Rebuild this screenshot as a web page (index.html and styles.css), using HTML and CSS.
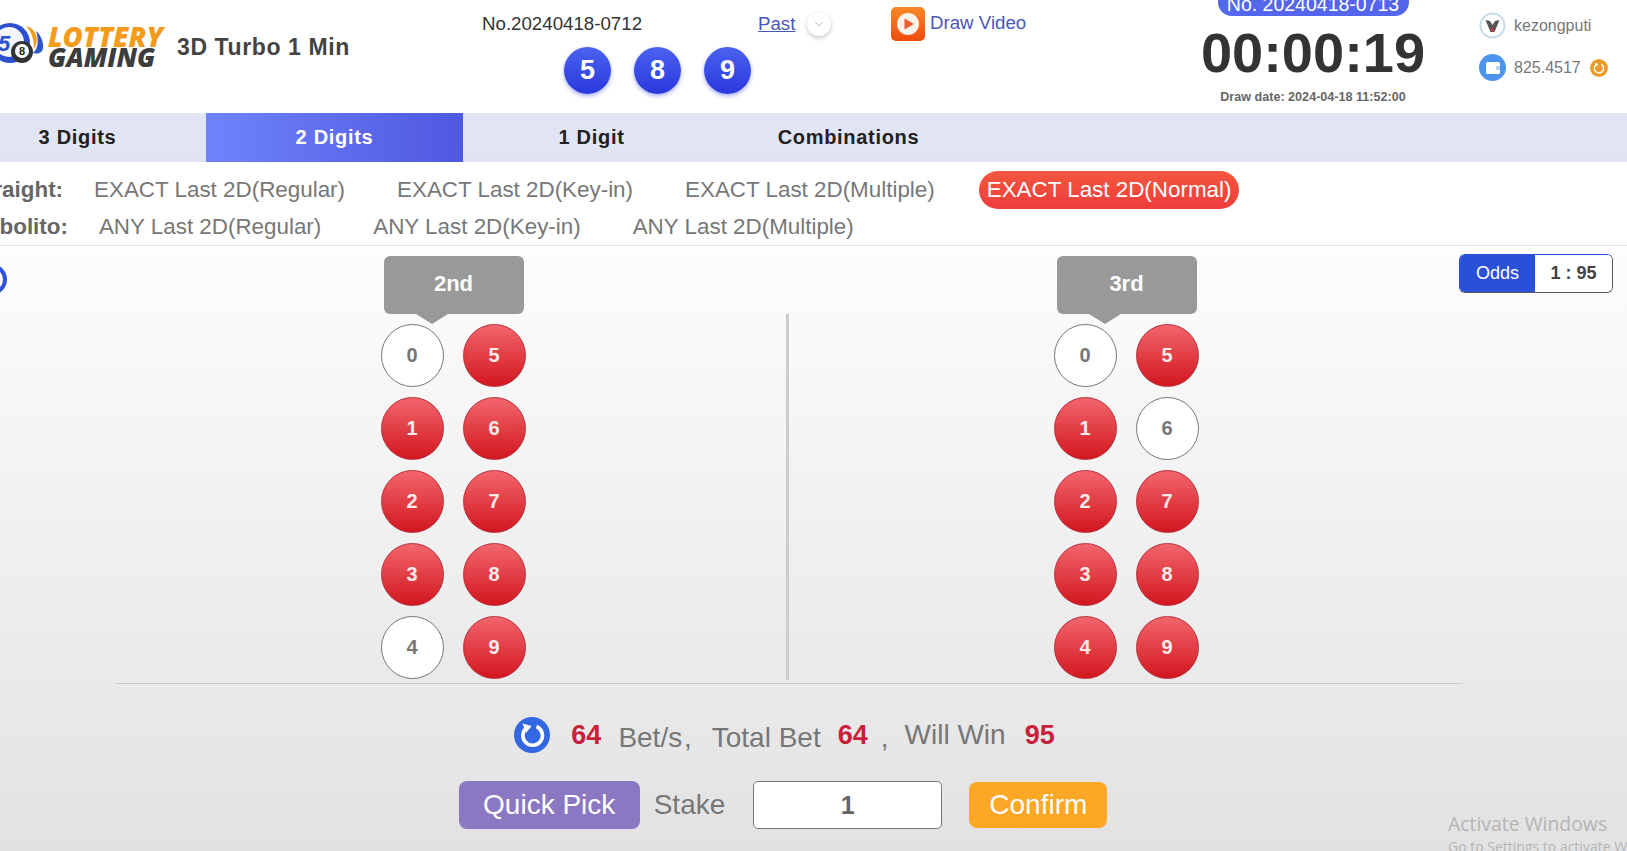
FILE: index.html
```html
<!DOCTYPE html>
<html lang="en">
<head>
    <meta charset="UTF-8">
    <title>3D Turbo 1 Min</title>
    <link rel="stylesheet" href="styles.css">
</head>
<body>

<div class="page">

    <!-- top bar -->
    <div class="header">
        <div class="brand">
            <svg class="brand-balls" width="60" height="50" viewBox="0 0 60 50">
                <path d="M31 4 C41 6 45 18 39 27 C39 18 37 10 31 4Z" fill="#f59b1c"/>
                <path d="M41 9 C47 14 50 24 47 29 C44 32 41 32 38 31 C43 27 44 18 41 9Z" fill="#2f55c8"/>
                <circle cx="15" cy="21" r="20" fill="#2b4fd0"/>
                <circle cx="14" cy="20" r="15" fill="#f4f6fc"/>
                <text x="9" y="29" class="brand-five">5</text>
                <circle cx="27" cy="30" r="11" fill="#333"/>
                <circle cx="27" cy="29" r="7" fill="#fff"/>
                <text x="27" y="33" class="brand-eight">8</text>
            </svg>
            <div class="brand-name">
                <div class="brand-top">LOTTERY</div>
                <div class="brand-bottom">GAMING</div>
            </div>
            <div class="game-name">3D Turbo 1 Min</div>
        </div>

        <div class="last-draw">
            <div class="last-no">No.20240418-0712</div>
            <div class="last-balls">
                <span class="result-ball">5</span>
                <span class="result-ball">8</span>
                <span class="result-ball">9</span>
            </div>
        </div>

        <div class="past">
            <a href="#" class="link">Past</a>
            <span class="past-toggle">
                <svg width="10" height="6" viewBox="0 0 10 6"><path d="M1 1 L5 5 L9 1" fill="none" stroke="#bbb" stroke-width="1"/></svg>
            </span>
        </div>

        <div class="video">
            <span class="video-icon">
                <svg width="34" height="34" viewBox="0 0 34 34">
                    <circle cx="17" cy="17" r="11" fill="#fdf3ea"/>
                    <path d="M13.5 11.5 L23 17 L13.5 22.5Z" fill="#ee5a32"/>
                </svg>
            </span>
            <a href="#" class="video-link">Draw Video</a>
        </div>

        <div class="countdown">
            <div class="next-no">No. 20240418-0713</div>
            <div class="timer">00:00:19</div>
            <div class="draw-date">Draw date: 2024-04-18 11:52:00</div>
        </div>

        <div class="account">
            <div class="account-row">
                <svg width="27" height="27" viewBox="0 0 27 27">
                    <circle cx="13.5" cy="13.5" r="12" fill="#fff" stroke="#c6dcec" stroke-width="2"/>
                    <path d="M6.5 8 L11 9 L13.5 13 L16 9 L20.5 8 L15.5 20 L11.5 20Z" fill="#555"/>
                    <path d="M13.5 15 L15.5 19 L11.5 19Z" fill="#d8344a"/>
                </svg>
                <span>kezongputi</span>
            </div>
            <div class="account-row">
                <svg width="27" height="27" viewBox="0 0 27 27">
                    <circle cx="13.5" cy="13.5" r="13.5" fill="#4f94ec"/>
                    <rect x="7" y="8" width="14" height="12" rx="1.5" fill="#fff"/>
                    <rect x="17" y="12" width="4" height="4" fill="#b8d4f4"/>
                </svg>
                <span>825.4517</span>
                <svg class="balance-refresh" width="18" height="18" viewBox="0 0 18 18">
                    <circle cx="9" cy="9" r="9" fill="#eb9c2a"/>
                    <path d="M6.2 5.6 A4.6 4.6 0 1 0 11.4 5.4" fill="none" stroke="#fff" stroke-width="1.4"/>
                    <path d="M5 3.8 L8.4 5 L6 7.6Z" fill="#fff"/>
                </svg>
            </div>
        </div>
    </div>

    <!-- game tabs -->
    <div class="tabs">
        <div class="tab">3 Digits</div>
        <div class="tab active">2 Digits</div>
        <div class="tab">1 Digit</div>
        <div class="tab">Combinations</div>
    </div>

    <!-- bet types -->
    <div class="types">
        <div class="type-row straight">
            <span class="type-label">Straight:</span>
            <div class="type-options">
                <span class="type-item">EXACT Last 2D(Regular)</span>
                <span class="type-item">EXACT Last 2D(Key-in)</span>
                <span class="type-item">EXACT Last 2D(Multiple)</span>
                <span class="type-item selected">EXACT Last 2D(Normal)</span>
            </div>
        </div>
        <div class="type-row rambolito">
            <span class="type-label">Rambolito:</span>
            <div class="type-options">
                <span class="type-item">ANY Last 2D(Regular)</span>
                <span class="type-item">ANY Last 2D(Key-in)</span>
                <span class="type-item">ANY Last 2D(Multiple)</span>
            </div>
        </div>
    </div>

    <!-- number board -->
    <div class="main">
        <span class="help-dot"></span>

        <div class="odds">
            <span class="odds-label">Odds</span>
            <span class="odds-value">1 : 95</span>
        </div>

        <div class="board">
            <div class="group">
                <div class="group-tag">2nd</div>
                <div class="balls">
                    <span class="ball off">0</span><span class="ball">5</span>
                    <span class="ball">1</span><span class="ball">6</span>
                    <span class="ball">2</span><span class="ball">7</span>
                    <span class="ball">3</span><span class="ball">8</span>
                    <span class="ball off">4</span><span class="ball">9</span>
                </div>
            </div>
            <div class="divider"></div>
            <div class="group">
                <div class="group-tag">3rd</div>
                <div class="balls">
                    <span class="ball off">0</span><span class="ball">5</span>
                    <span class="ball">1</span><span class="ball off">6</span>
                    <span class="ball">2</span><span class="ball">7</span>
                    <span class="ball">3</span><span class="ball">8</span>
                    <span class="ball">4</span><span class="ball">9</span>
                </div>
            </div>
        </div>

        <div class="summary">
            <svg class="reset-icon" width="36" height="36" viewBox="0 0 36 36">
                <circle cx="18" cy="18" r="18" fill="#3468e2"/>
                <path d="M13 10.5 A9.8 9.8 0 1 0 22.5 9.5" fill="none" stroke="#fff" stroke-width="3.6"/>
                <path d="M8.5 6.5 L17.5 9 L12 16Z" fill="#fff"/>
            </svg>
            <span class="num">64</span>
            <span class="txt bet-label">Bet/s ,</span>
            <span class="txt total-label">Total Bet</span>
            <span class="num">64</span>
            <span class="txt comma">,</span>
            <span class="txt win-label">Will Win</span>
            <span class="num">95</span>
        </div>

        <div class="actions">
            <button class="quick-pick">Quick Pick</button>
            <span class="stake-label">Stake</span>
            <input class="stake" type="text" value="1">
            <button class="confirm">Confirm</button>
        </div>
    </div>
</div>

<div class="activate">
    <div class="activate-title">Activate Windows</div>
    <div class="activate-sub">Go to Settings to activate Windows.</div>
</div>

</body>
</html>
```

FILE: styles.css
```css
html, body {
    margin: 0;
    padding: 0;
    height: 851px;
    overflow: hidden;
    background: #fff;
}
body {
    font-family: "Liberation Sans", Arial, sans-serif;
    color: #777;
    position: relative;
}
/* the page is scrolled a little to the right in the shot */
.page {
    width: 1681px;
    margin-left: -51px;
    height: 851px;
    display: flex;
    flex-direction: column;
    background: #fff;
}

/* header */
.header {
    height: 113px;
    display: flex;
    flex-shrink: 0;
    overflow: hidden;
}
.brand {
    width: 533px;
    padding-left: 46px;
    padding-top: 22px;
    display: flex;
    align-items: flex-start;
    box-sizing: border-box;
}
.brand-balls {
    flex-shrink: 0;
}
.brand-five {
    font: italic bold 22px "Liberation Sans", sans-serif;
    fill: #2b4fd0;
    text-anchor: middle;
}
.brand-eight {
    font: bold 11px "Liberation Sans", sans-serif;
    fill: #222;
    text-anchor: middle;
}
.brand-name {
    font-family: "Open Sans", sans-serif;
    font-style: italic;
    font-weight: 800;
    line-height: 21px;
    margin-left: -7px;
    padding-top: 4px;
    width: 129px;
}
.brand-top {
    color: #f59b1c;
    font-size: 27.5px;
}
.brand-bottom {
    color: #3c3c3c;
    font-size: 26px;
}
.game-name {
    font-size: 23px;
    font-weight: bold;
    color: #444;
    letter-spacing: 0.6px;
    margin-top: 12px;
    white-space: nowrap;
}
.last-draw {
    width: 276px;
    padding-top: 12px;
    box-sizing: border-box;
}
.last-no {
    font-size: 18.7px;
    line-height: 23px;
    color: #333;
}
.last-balls {
    display: flex;
    gap: 23px;
    margin-top: 12px;
    padding-left: 82px;
}
.result-ball {
    width: 47px;
    height: 47px;
    border-radius: 50%;
    background: linear-gradient(to bottom, #4a62f0, #2a38dc);
    box-shadow: 0 2px 4px rgba(60, 70, 230, 0.45);
    color: #fff;
    font-size: 27px;
    font-weight: bold;
    line-height: 47px;
    text-align: center;
}
.past {
    width: 133px;
    display: flex;
    align-items: flex-start;
    padding-top: 12px;
    box-sizing: border-box;
}
.link {
    font-size: 18.7px;
    line-height: 23px;
    color: #4a56b8;
}
.past-toggle {
    width: 24px;
    height: 24px;
    margin-left: 12px;
    border-radius: 50%;
    background: #fff;
    box-shadow: 0 2px 4px rgba(0, 0, 0, 0.22);
    display: flex;
    align-items: center;
    justify-content: center;
}
.video {
    width: 291px;
    display: flex;
    align-items: flex-start;
    padding-top: 7px;
    box-sizing: border-box;
}
.video-icon {
    width: 34px;
    height: 34px;
    border-radius: 5px;
    background: linear-gradient(to bottom, #f98a26, #f04a10);
    display: block;
}
.video-link {
    font-size: 18.7px;
    line-height: 32px;
    margin-left: 5px;
    color: #4a56b8;
    text-decoration: none;
}
.countdown {
    width: 262px;
    text-align: center;
    margin-top: -12px;
}
.next-no {
    width: 191px;
    height: 28px;
    margin: 0 auto;
    border-radius: 14px;
    background: #5566ee;
    color: #fff;
    font-size: 19.5px;
    line-height: 32px;
}
.timer {
    font-size: 56px;
    font-weight: bold;
    color: #333;
    line-height: 64px;
    margin-top: 5px;
}
.draw-date {
    font-size: 12.6px;
    font-weight: bold;
    color: #666;
    line-height: 18px;
    margin-top: 3px;
}
.account {
    padding-top: 12px;
    padding-left: 35px;
}
.account-row {
    display: flex;
    align-items: center;
    height: 27px;
    margin-bottom: 15px;
    font-size: 16px;
    color: #777;
}
.account-row span {
    margin-left: 8px;
}
.balance-refresh {
    margin-left: 9px;
}

/* tabs */
.tabs {
    height: 49px;
    display: flex;
    flex-shrink: 0;
    background: linear-gradient(to bottom, #e2e5f5, #dfe4f2);
}
.tab {
    width: 257px;
    line-height: 49px;
    text-align: center;
    font-size: 20px;
    font-weight: bold;
    letter-spacing: 0.7px;
    color: #222;
}
.tab.active {
    background: linear-gradient(to right, #6f83fb, #4f58e0);
    color: #fff;
}

/* bet types */
.types {
    padding-top: 9px;
    border-bottom: 1px solid #e4e4e4;
    flex-shrink: 0;
    height: 74px;
}
.type-row {
    display: flex;
    align-items: center;
    height: 37px;
    font-size: 22.4px;
    white-space: nowrap;
}
.type-row.straight {
    padding-left: 22px;
}
.type-row.rambolito {
    padding-left: 2px;
}
.type-label {
    font-weight: bold;
    color: #666;
}
.type-options {
    display: flex;
    gap: 36px;
    margin-left: 23px;
}
.type-item {
    padding: 0 8px;
    height: 38px;
    line-height: 38px;
    border-radius: 19px;
    color: #777;
}
.type-item.selected {
    background: linear-gradient(to bottom, #f4573f, #ee3c3c);
    color: #fff;
}

/* board */
.main {
    flex: 1;
    position: relative;
    padding-top: 10px;
    background: linear-gradient(to bottom, #fdfdfd, #e2e2e2);
}
.help-dot {
    position: absolute;
    left: 27px;
    top: 18px;
    width: 23px;
    height: 23px;
    border: 4px solid #2f50d8;
    border-radius: 50%;
}
.odds {
    position: absolute;
    left: 1510px;
    top: 8px;
    display: flex;
    width: 154px;
    height: 39px;
    box-sizing: border-box;
    border: 1px solid #2a50d8;
    border-right-color: #556;
    border-bottom-color: #556;
    border-radius: 6px;
    overflow: hidden;
    font-size: 18px;
    line-height: 37px;
    text-align: center;
}
.odds-label {
    width: 75px;
    background: #2a50d8;
    color: #fff;
}
.odds-value {
    flex: 1;
    background: #fff;
    color: #444;
    font-weight: bold;
}
.board {
    width: 1347px;
    height: 427px;
    margin: 0 auto;
    display: grid;
    grid-template-columns: 670px 3px 1fr;
    border-bottom: 1px solid #c8c8c8;
}
.group {
    width: 145px;
    justify-self: center;
}
.group:first-child {
    margin-left: 4px;
}
.divider {
    background: #ccc;
    margin-top: 58px;
    margin-bottom: 3px;
}
.group-tag {
    width: 140px;
    height: 58px;
    margin-left: 3px;
    margin-bottom: 10px;
    border-radius: 6px;
    background: #999;
    color: #fff;
    font-size: 22px;
    font-weight: bold;
    line-height: 56px;
    text-align: center;
    position: relative;
}
.group-tag::after {
    content: "";
    position: absolute;
    left: 32px;
    top: 58px;
    border-left: 16px solid transparent;
    border-right: 16px solid transparent;
    border-top: 10px solid #999;
}
.balls {
    display: grid;
    grid-template-columns: 63px 63px;
    column-gap: 19px;
    row-gap: 10px;
}
.ball {
    width: 63px;
    height: 63px;
    box-sizing: border-box;
    border-radius: 50%;
    border: 1px solid #b8303e;
    background: linear-gradient(to bottom, #f2666c, #d2161f);
    color: #fbeaea;
    font-size: 20px;
    font-weight: bold;
    line-height: 60px;
    text-align: center;
}
.ball.off {
    background: #fff;
    border-color: #777;
    color: #777;
}

/* summary and buttons */
.summary {
    display: flex;
    align-items: center;
    justify-content: center;
    height: 36px;
    margin-top: 33px;
    padding-right: 10px;
    font-size: 27px;
}
.reset-icon {
    margin-right: 21px;
}
.num {
    font-weight: bold;
    color: #c8203a;
}
.txt {
    color: #777;
    font-size: 28px;
}
.bet-label {
    margin-left: 17px;
    margin-right: 20px;
    margin-top: 6px;
    word-spacing: -6px;
}
.total-label {
    margin-right: 17px;
    margin-top: 6px;
}
.comma {
    margin-left: 13px;
    margin-right: 16px;
    margin-top: 5px;
}
.win-label {
    margin-right: 19px;
}
.actions {
    display: flex;
    align-items: center;
    justify-content: center;
    margin-top: 28px;
    padding-right: 13px;
}
.quick-pick, .confirm {
    border: none;
    color: #fff;
    font-family: "Liberation Sans", Arial, sans-serif;
    font-size: 28px;
    padding: 0;
}
.quick-pick {
    width: 181px;
    height: 48px;
    border-radius: 8px;
    background: #8b78c2;
}
.stake-label {
    font-size: 28px;
    color: #777;
    margin-left: 14px;
    margin-right: 28px;
}
.stake {
    width: 189px;
    height: 48px;
    box-sizing: border-box;
    border: 1px solid #777;
    border-radius: 5px;
    background: #fff;
    font-family: "Liberation Sans", Arial, sans-serif;
    font-size: 25px;
    font-weight: bold;
    color: #666;
    text-align: center;
}
.confirm {
    width: 138px;
    height: 46px;
    margin-left: 27px;
    border-radius: 8px;
    background: #fca726;
}

/* windows watermark */
.activate {
    position: absolute;
    left: 1448px;
    top: 810px;
    font-family: "Open Sans", sans-serif;
    color: #b5b5b5;
    white-space: nowrap;
}
.activate-title {
    font-size: 19.4px;
    line-height: 27px;
}
.activate-sub {
    font-size: 14px;
    line-height: 20px;
}
```
